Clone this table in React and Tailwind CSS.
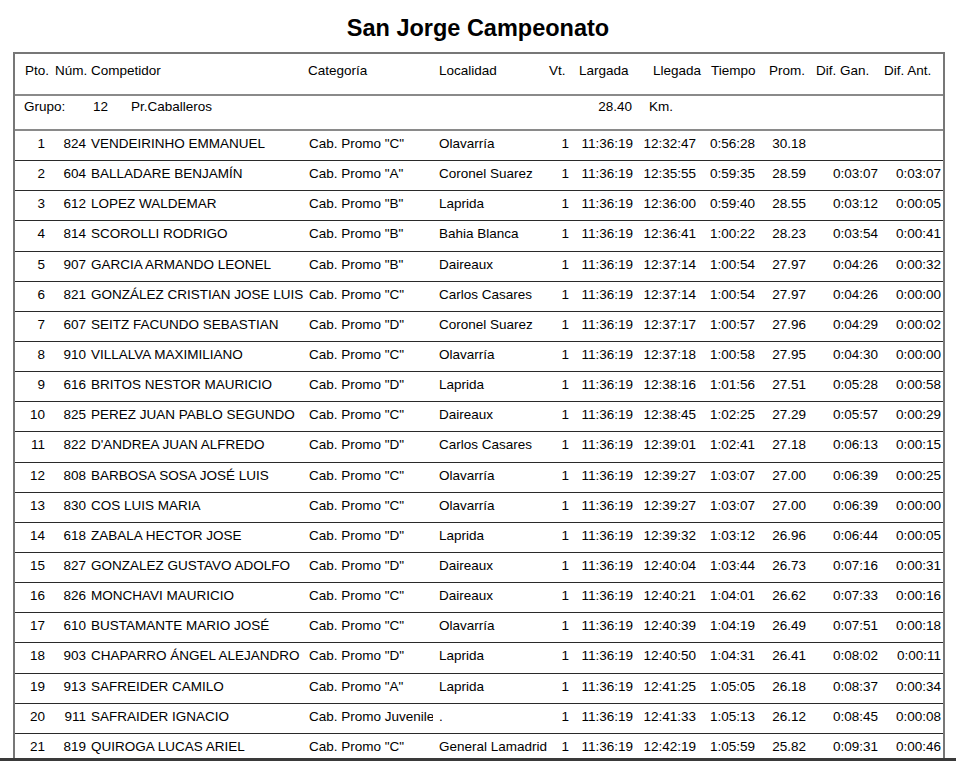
const ROWS = [
    [1, 824, "VENDEIRINHO EMMANUEL", 'Cab. Promo "C"', "Olavarría", "12:32:47", "0:56:28", "30.18", "", ""],
    [2, 604, "BALLADARE BENJAMÍN", 'Cab. Promo "A"', "Coronel Suarez", "12:35:55", "0:59:35", "28.59", "0:03:07", "0:03:07"],
    [3, 612, "LOPEZ WALDEMAR", 'Cab. Promo "B"', "Laprida", "12:36:00", "0:59:40", "28.55", "0:03:12", "0:00:05"],
    [4, 814, "SCOROLLI RODRIGO", 'Cab. Promo "B"', "Bahia Blanca", "12:36:41", "1:00:22", "28.23", "0:03:54", "0:00:41"],
    [5, 907, "GARCIA ARMANDO LEONEL", 'Cab. Promo "B"', "Daireaux", "12:37:14", "1:00:54", "27.97", "0:04:26", "0:00:32"],
    [6, 821, "GONZÁLEZ CRISTIAN JOSE LUIS", 'Cab. Promo "C"', "Carlos Casares", "12:37:14", "1:00:54", "27.97", "0:04:26", "0:00:00"],
    [7, 607, "SEITZ FACUNDO SEBASTIAN", 'Cab. Promo "D"', "Coronel Suarez", "12:37:17", "1:00:57", "27.96", "0:04:29", "0:00:02"],
    [8, 910, "VILLALVA MAXIMILIANO", 'Cab. Promo "C"', "Olavarría", "12:37:18", "1:00:58", "27.95", "0:04:30", "0:00:00"],
    [9, 616, "BRITOS NESTOR MAURICIO", 'Cab. Promo "D"', "Laprida", "12:38:16", "1:01:56", "27.51", "0:05:28", "0:00:58"],
    [10, 825, "PEREZ JUAN PABLO SEGUNDO", 'Cab. Promo "C"', "Daireaux", "12:38:45", "1:02:25", "27.29", "0:05:57", "0:00:29"],
    [11, 822, "D'ANDREA JUAN ALFREDO", 'Cab. Promo "D"', "Carlos Casares", "12:39:01", "1:02:41", "27.18", "0:06:13", "0:00:15"],
    [12, 808, "BARBOSA SOSA JOSÉ LUIS", 'Cab. Promo "C"', "Olavarría", "12:39:27", "1:03:07", "27.00", "0:06:39", "0:00:25"],
    [13, 830, "COS LUIS MARIA", 'Cab. Promo "C"', "Olavarría", "12:39:27", "1:03:07", "27.00", "0:06:39", "0:00:00"],
    [14, 618, "ZABALA HECTOR JOSE", 'Cab. Promo "D"', "Laprida", "12:39:32", "1:03:12", "26.96", "0:06:44", "0:00:05"],
    [15, 827, "GONZALEZ GUSTAVO ADOLFO", 'Cab. Promo "D"', "Daireaux", "12:40:04", "1:03:44", "26.73", "0:07:16", "0:00:31"],
    [16, 826, "MONCHAVI MAURICIO", 'Cab. Promo "C"', "Daireaux", "12:40:21", "1:04:01", "26.62", "0:07:33", "0:00:16"],
    [17, 610, "BUSTAMANTE MARIO JOSÉ", 'Cab. Promo "C"', "Olavarría", "12:40:39", "1:04:19", "26.49", "0:07:51", "0:00:18"],
    [18, 903, "CHAPARRO ÁNGEL ALEJANDRO", 'Cab. Promo "D"', "Laprida", "12:40:50", "1:04:31", "26.41", "0:08:02", "0:00:11"],
    [19, 913, "SAFREIDER CAMILO", 'Cab. Promo "A"', "Laprida", "12:41:25", "1:05:05", "26.18", "0:08:37", "0:00:34"],
    [20, 911, "SAFRAIDER IGNACIO", "Cab. Promo Juvenile", ".", "12:41:33", "1:05:13", "26.12", "0:08:45", "0:00:08"],
    [21, 819, "QUIROGA LUCAS ARIEL", 'Cab. Promo "C"', "General Lamadrid", "12:42:19", "1:05:59", "25.82", "0:09:31", "0:00:46"],
];

// ─── Header ──────────────────────────────────────────────────────────────
const HeaderRow = () => (
    <div className="flex h-[42px] shrink-0 pl-[10px] pt-[9px] border-b-2 border-[#8a8a8a] whitespace-nowrap">
        <span className="w-[30px]">Pto.</span>
        <span className="w-[36px]">Núm.</span>
        <span className="w-[217px]">Competidor</span>
        <span className="w-[131px]">Categoría</span>
        <span className="w-[110px]">Localidad</span>
        <span className="w-[30px]">Vt.</span>
        <span className="w-[74px]">Largada</span>
        <span className="w-[58px]">Llegada</span>
        <span className="w-[58px]">Tiempo</span>
        <span className="w-[47px]">Prom.</span>
        <span className="w-[68px]">Dif. Gan.</span>
        <span>Dif. Ant.</span>
    </div>
);

// ─── Group row ───────────────────────────────────────────────────────────
const GroupRow = () => (
    <div className="flex h-[35px] shrink-0 pl-[9px] pt-[3px] border-b-2 border-[#8a8a8a] whitespace-nowrap">
        <span className="w-[69px]">Grupo:</span>
        <span className="w-[38px]">12</span>
        <span className="w-[439px]">Pr.Caballeros</span>
        <span className="w-[62px] text-right">28.40</span>
        <span className="pl-[17px]">Km.</span>
    </div>
);

// ─── Data row ────────────────────────────────────────────────────────────
const DataRow = ({ r }) => (
    <div className="flex h-[30.15px] shrink-0 pt-[5px] border-b border-[#2a2a2a] whitespace-nowrap">
        <span className="w-[30px] text-right">{r[0]}</span>
        <span className="w-[41px] text-right">{r[1]}</span>
        <span className="w-[223px] pl-[5px]">{r[2]}</span>
        <span className="w-[124px] overflow-hidden">{r[3]}</span>
        <span className="w-[112px] pl-[6px]">{r[4]}</span>
        <span className="w-[24px] text-right">1</span>
        <span className="w-[64px] text-right">11:36:19</span>
        <span className="w-[63px] text-right">{r[5]}</span>
        <span className="w-[59px] text-right">{r[6]}</span>
        <span className="w-[51px] text-right">{r[7]}</span>
        <span className="w-[72px] text-right">{r[8]}</span>
        <span className="w-[63px] text-right">{r[9]}</span>
    </div>
);

export default function App() {
    return (
        <div className="h-[761px] w-[956px] bg-white flex flex-col overflow-hidden text-black font-['Liberation_Sans',Arial,sans-serif]">
            <div className="flex-1 min-h-0 flex flex-col">
                <h1 className="h-[52px] shrink-0 pt-[14px] text-center text-[23.5px] leading-[28px] font-bold">
                    San Jorge Campeonato
                </h1>
                <div className="ml-[13px] w-[932px] flex-1 min-h-0 flex flex-col overflow-hidden border-x-2 border-t-2 border-[#777] text-[13.5px] leading-[16px]">
                    <HeaderRow />
                    <GroupRow />
                    {ROWS.map((r) => (
                        <DataRow key={r[0]} r={r} />
                    ))}
                </div>
            </div>
            <div className="h-[3px] shrink-0 bg-[#3a3a3a]" />
        </div>
    );
}
